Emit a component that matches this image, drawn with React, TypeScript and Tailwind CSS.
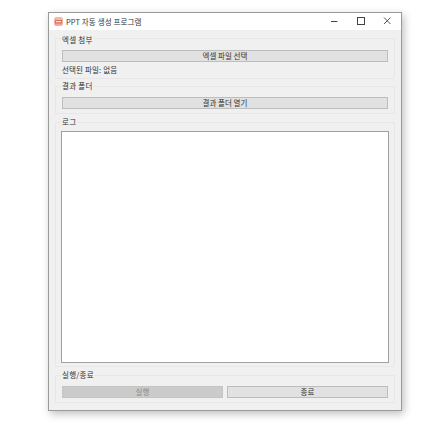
function Group({ title, className, labelTop = '-top-[8px]', children }: { title: string; className: string; labelTop?: string; children: React.ReactNode }) {
  return (
    <div className={`relative mx-1.5 rounded-[1px] border border-[#e7e7e7] ${className}`}>
      <span className={`absolute ${labelTop} left-[5px] bg-[#f0f0f0] px-[1px] text-[7.5px] leading-[14px] tracking-[0.25px] text-[#333]`}>{title}</span>
      {children}
    </div>
  );
}

function Btn({ children, disabled, className = '' }: { children: React.ReactNode; disabled?: boolean; className?: string }) {
  return (
    <button
      className={`flex h-[12px] items-center justify-center border border-[#bdbdbd] text-[7.5px] leading-none ${
        disabled ? 'border-[#c4c4c4] bg-[#cbcbcb] text-[#8a8a8a]' : 'bg-[#e1e1e1] text-[#333]'
      } ${className}`}
    >
      {children}
    </button>
  );
}

export default function App() {
  return (
    <div className="h-[428px] w-[428px] overflow-hidden bg-white pl-[48px] pt-[12px] font-['Noto_Sans_CJK_KR','Noto_Sans',sans-serif]">
      <div className="flex h-[399px] w-[354px] flex-col border border-[#9a9a9a] bg-[#f0f0f0] shadow-[2px_3px_8px_rgba(0,0,0,0.25)]">
        {/* Title bar */}
        <div className="flex h-[17px] shrink-0 items-center bg-white pl-[5px] text-[#333]">
          <svg width="9" height="9" viewBox="0 0 9 9" className="mr-[3px]">
            <rect x="0.5" y="0.5" width="8" height="8" rx="1.5" fill="#e0705c" />
            <rect x="0.5" y="0.5" width="8" height="2.5" rx="1" fill="#f2b8ac" />
            <rect x="0.5" y="6.5" width="8" height="2" rx="1" fill="#f0a898" />
            <rect x="2" y="4.2" width="5" height="1" fill="#fff" />
          </svg>
          <span className="text-[7.5px] leading-none tracking-[0.1px]">PPT 자동 생성 프로그램</span>
          <div className="ml-auto flex items-center">
            <svg width="27" height="12" viewBox="0 0 27 12">
              <path d="M11 5.5h6.5" stroke="#444" strokeWidth="1" />
            </svg>
            <svg width="27" height="12" viewBox="0 0 27 12">
              <rect x="10.5" y="1.5" width="7" height="7" fill="none" stroke="#444" strokeWidth="1" />
            </svg>
            <svg width="27" height="12" viewBox="0 0 27 12">
              <path d="M10 1.5l6.5 6.5M16.5 1.5L10 8" stroke="#444" strokeWidth="0.9" />
            </svg>
          </div>
        </div>

        {/* Excel */}
        <Group title="엑셀 첨부" labelTop="-top-[6px]" className="mt-[8px] h-[41px] px-[6px] pt-[11px]">
          <Btn className="w-full">엑셀 파일 선택</Btn>
          <div className="mt-[1px] text-[7.5px] leading-[14px] tracking-[0.15px] text-[#333]">선택된 파일: 없음</div>
        </Group>

        {/* Result folder */}
        <Group title="결과 폴더" className="mt-[7px] h-[28px] px-[6px] pt-[10px]">
          <Btn className="w-full">결과 폴더 열기</Btn>
        </Group>

        {/* Log */}
        <Group title="로그" className="mt-[8px] h-[245px] px-[5px] pt-[8px]">
          <div className="h-[232px] w-full border border-[#a0a0a0] bg-white" />
        </Group>

        {/* Run */}
        <Group title="실행/종료" className="mt-[8px] h-[28px] px-[6px] pt-[10px]">
          <div className="flex gap-[4px]">
            <Btn disabled className="flex-1">실행</Btn>
            <Btn className="flex-1">종료</Btn>
          </div>
        </Group>
      </div>
    </div>
  );
}
